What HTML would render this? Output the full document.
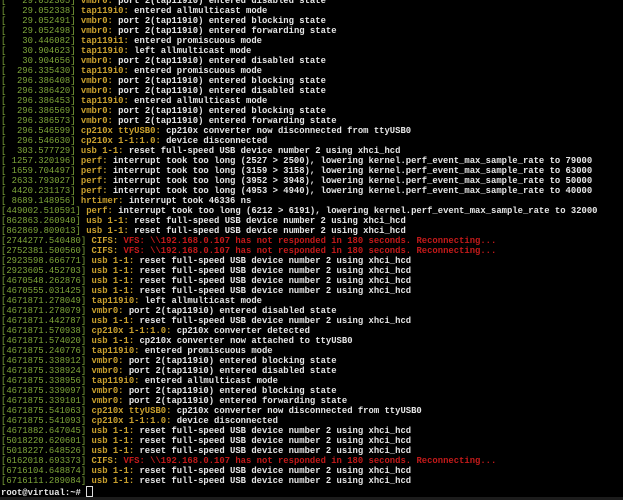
<!DOCTYPE html>
<html><head><style>
html,body{margin:0;padding:0;background:#000;width:623px;height:500px;overflow:hidden}
#t{position:absolute;left:1px;top:-4px;z-index:2;font-family:"Liberation Mono",monospace;font-size:8.88px;font-weight:bold;color:#e6e6e6}
#t div{height:10px;line-height:10px;white-space:pre}
.g{color:#7ea63a;font-weight:normal}
.y{color:#c9a02e}
.r{color:#c41a1a}
#bar{position:absolute;left:0;top:497px;width:623px;height:3px;background:#1c1c1c;z-index:1}
.cur{display:inline-block;width:5px;height:9px;border:1px solid #ddd;vertical-align:-2px}
</style></head><body>
<div id="t"><div><span class="g">[   29.052305]</span> <span class="y">vmbr0:</span> port 2(tap119i0) entered disabled state</div><div><span class="g">[   29.052338]</span> <span class="y">tap119i0:</span> entered allmulticast mode</div><div><span class="g">[   29.052491]</span> <span class="y">vmbr0:</span> port 2(tap119i0) entered blocking state</div><div><span class="g">[   29.052498]</span> <span class="y">vmbr0:</span> port 2(tap119i0) entered forwarding state</div><div><span class="g">[   30.446082]</span> <span class="y">tap119i1:</span> entered promiscuous mode</div><div><span class="g">[   30.904623]</span> <span class="y">tap119i0:</span> left allmulticast mode</div><div><span class="g">[   30.904656]</span> <span class="y">vmbr0:</span> port 2(tap119i0) entered disabled state</div><div><span class="g">[  296.335430]</span> <span class="y">tap119i0:</span> entered promiscuous mode</div><div><span class="g">[  296.386408]</span> <span class="y">vmbr0:</span> port 2(tap119i0) entered blocking state</div><div><span class="g">[  296.386420]</span> <span class="y">vmbr0:</span> port 2(tap119i0) entered disabled state</div><div><span class="g">[  296.386453]</span> <span class="y">tap119i0:</span> entered allmulticast mode</div><div><span class="g">[  296.386569]</span> <span class="y">vmbr0:</span> port 2(tap119i0) entered blocking state</div><div><span class="g">[  296.386573]</span> <span class="y">vmbr0:</span> port 2(tap119i0) entered forwarding state</div><div><span class="g">[  296.546599]</span> <span class="y">cp210x ttyUSB0:</span> cp210x converter now disconnected from ttyUSB0</div><div><span class="g">[  296.546630]</span> <span class="y">cp210x 1-1:1.0:</span> device disconnected</div><div><span class="g">[  303.577729]</span> <span class="y">usb 1-1:</span> reset full-speed USB device number 2 using xhci_hcd</div><div><span class="g">[ 1257.320196]</span> <span class="y">perf:</span> interrupt took too long (2527 &gt; 2500), lowering kernel.perf_event_max_sample_rate to 79000</div><div><span class="g">[ 1659.704497]</span> <span class="y">perf:</span> interrupt took too long (3159 &gt; 3158), lowering kernel.perf_event_max_sample_rate to 63000</div><div><span class="g">[ 2633.793027]</span> <span class="y">perf:</span> interrupt took too long (3952 &gt; 3948), lowering kernel.perf_event_max_sample_rate to 50000</div><div><span class="g">[ 4420.231173]</span> <span class="y">perf:</span> interrupt took too long (4953 &gt; 4940), lowering kernel.perf_event_max_sample_rate to 40000</div><div><span class="g">[ 8689.148956]</span> <span class="y">hrtimer:</span> interrupt took 46336 ns</div><div><span class="g">[449002.510591]</span> <span class="y">perf:</span> interrupt took too long (6212 &gt; 6191), lowering kernel.perf_event_max_sample_rate to 32000</div><div><span class="g">[862863.260940]</span> <span class="y">usb 1-1:</span> reset full-speed USB device number 2 using xhci_hcd</div><div><span class="g">[862869.809013]</span> <span class="y">usb 1-1:</span> reset full-speed USB device number 2 using xhci_hcd</div><div><span class="g">[2744277.540480]</span> <span class="y">CIFS:</span> <span class="r">VFS: \\192.168.0.107 has not responded in 180 seconds. Reconnecting...</span></div><div><span class="g">[2752381.500560]</span> <span class="y">CIFS:</span> <span class="r">VFS: \\192.168.0.107 has not responded in 180 seconds. Reconnecting...</span></div><div><span class="g">[2923598.666771]</span> <span class="y">usb 1-1:</span> reset full-speed USB device number 2 using xhci_hcd</div><div><span class="g">[2923605.452703]</span> <span class="y">usb 1-1:</span> reset full-speed USB device number 2 using xhci_hcd</div><div><span class="g">[4670548.262876]</span> <span class="y">usb 1-1:</span> reset full-speed USB device number 2 using xhci_hcd</div><div><span class="g">[4670555.031425]</span> <span class="y">usb 1-1:</span> reset full-speed USB device number 2 using xhci_hcd</div><div><span class="g">[4671871.278049]</span> <span class="y">tap119i0:</span> left allmulticast mode</div><div><span class="g">[4671871.278079]</span> <span class="y">vmbr0:</span> port 2(tap119i0) entered disabled state</div><div><span class="g">[4671871.442787]</span> <span class="y">usb 1-1:</span> reset full-speed USB device number 2 using xhci_hcd</div><div><span class="g">[4671871.570938]</span> <span class="y">cp210x 1-1:1.0:</span> cp210x converter detected</div><div><span class="g">[4671871.574020]</span> <span class="y">usb 1-1:</span> cp210x converter now attached to ttyUSB0</div><div><span class="g">[4671875.240776]</span> <span class="y">tap119i0:</span> entered promiscuous mode</div><div><span class="g">[4671875.338912]</span> <span class="y">vmbr0:</span> port 2(tap119i0) entered blocking state</div><div><span class="g">[4671875.338924]</span> <span class="y">vmbr0:</span> port 2(tap119i0) entered disabled state</div><div><span class="g">[4671875.338956]</span> <span class="y">tap119i0:</span> entered allmulticast mode</div><div><span class="g">[4671875.339097]</span> <span class="y">vmbr0:</span> port 2(tap119i0) entered blocking state</div><div><span class="g">[4671875.339101]</span> <span class="y">vmbr0:</span> port 2(tap119i0) entered forwarding state</div><div><span class="g">[4671875.541063]</span> <span class="y">cp210x ttyUSB0:</span> cp210x converter now disconnected from ttyUSB0</div><div><span class="g">[4671875.541093]</span> <span class="y">cp210x 1-1:1.0:</span> device disconnected</div><div><span class="g">[4671882.647045]</span> <span class="y">usb 1-1:</span> reset full-speed USB device number 2 using xhci_hcd</div><div><span class="g">[5018220.620601]</span> <span class="y">usb 1-1:</span> reset full-speed USB device number 2 using xhci_hcd</div><div><span class="g">[5018227.648526]</span> <span class="y">usb 1-1:</span> reset full-speed USB device number 2 using xhci_hcd</div><div><span class="g">[6162018.693373]</span> <span class="y">CIFS:</span> <span class="r">VFS: \\192.168.0.107 has not responded in 180 seconds. Reconnecting...</span></div><div><span class="g">[6716104.648874]</span> <span class="y">usb 1-1:</span> reset full-speed USB device number 2 using xhci_hcd</div><div><span class="g">[6716111.289084]</span> <span class="y">usb 1-1:</span> reset full-speed USB device number 2 using xhci_hcd</div><div>root@virtual:~# <span class="cur"></span></div></div>
<div id="bar"></div>
</body></html>
